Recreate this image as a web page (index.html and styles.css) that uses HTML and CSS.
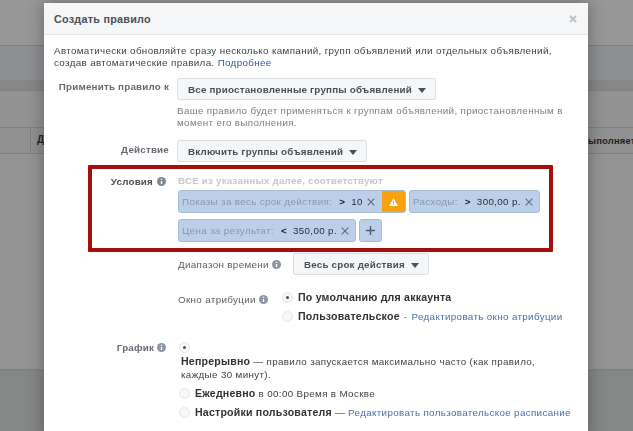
FILE: index.html
```html
<!DOCTYPE html>
<html lang="ru">
<head>
<meta charset="utf-8">
<title>Создать правило</title>
<link rel="stylesheet" href="styles.css">
</head>
<body>
<div class="backdrop">
  <div class="bg-row bg-a"></div>
  <div class="bg-row bg-b"></div>
  <div class="bg-row bg-c"></div>
  <div class="bg-row bg-d"><span class="bg-d-left">Д</span><span class="bg-d-right">ыполняет</span></div>
  <div class="bg-row bg-e"></div>
  <div class="bg-row bg-f"></div>
</div>
<section class="modal">
  <header class="modal-head">
    <h1>Создать правило</h1>
    <svg class="close" width="8" height="8" viewBox="0 0 8 8"><path d="M1 1l6 6M7 1l-6 6" stroke="#bcc0c6" stroke-width="1.8"/></svg>
  </header>
  <div class="modal-body">
    <p class="intro">Автоматически обновляйте сразу несколько кампаний, групп объявлений или отдельных объявлений, создав автоматические правила. <a>Подробнее</a></p>

    <div class="field apply">
      <div class="label">Применить правило к</div>
      <div class="content">
        <button class="select">Все приостановленные группы объявлений<i class="caret"></i></button>
        <p class="hint">Ваше правило будет применяться к группам объявлений, приостановленным в момент его выполнения.</p>
      </div>
    </div>

    <div class="field action">
      <div class="label">Действие</div>
      <div class="content">
        <button class="select">Включить группы объявлений<i class="caret"></i></button>
      </div>
    </div>

    <div class="conditions">
      <div class="label">Условия
        <svg class="info" viewBox="0 0 10 10"><circle cx="5" cy="5" r="5" fill="#7f8792"/><path d="M5 4.4v3.4M5 2v1.3" stroke="#fff" stroke-width="1.5"/></svg>
      </div>
      <div class="content">
        <div class="cond-title">ВСЕ из указанных далее, соответствуют</div>
        <div class="chips">
          <div class="chip warned">
            <span class="chip-name">Показы за весь срок действия:</span><b class="op">&gt;</b><span class="val">10</span>
            <svg class="x" viewBox="0 0 8 8"><path d="M.7.7l6.6 6.6M7.3.7L.7 7.3" stroke="#5d6c85" stroke-width="1.1"/></svg>
            <span class="warn"><svg width="9" height="8" viewBox="0 0 9 8"><path d="M4.5.2L9 8H0z" fill="#fff"/><path d="M4.5 2.8v2.6M4.5 6v1" stroke="#f7a30f" stroke-width=".9"/></svg></span>
          </div>
          <div class="chip">
            <span class="chip-name">Расходы:</span><b class="op">&gt;</b><span class="val">300,00 р.</span>
            <svg class="x" viewBox="0 0 8 8"><path d="M.7.7l6.6 6.6M7.3.7L.7 7.3" stroke="#5d6c85" stroke-width="1.1"/></svg>
          </div>
          <div class="chip">
            <span class="chip-name">Цена за результат:</span><b class="op">&lt;</b><span class="val">350,00 р.</span>
            <svg class="x" viewBox="0 0 8 8"><path d="M.7.7l6.6 6.6M7.3.7L.7 7.3" stroke="#5d6c85" stroke-width="1.1"/></svg>
          </div>
          <div class="chip plus"><svg width="9" height="9" viewBox="0 0 9 9"><path d="M4.5 0v9M0 4.5h9" stroke="#4f5d75" stroke-width="1.4"/></svg></div>
        </div>
      </div>
    </div>

    <div class="sub time">
      <span class="sub-label">Диапазон времени
        <svg class="info" viewBox="0 0 10 10"><circle cx="5" cy="5" r="5" fill="#8d95a0"/><path d="M5 4.4v3.4M5 2v1.3" stroke="#fff" stroke-width="1.5"/></svg>
      </span>
      <button class="select">Весь срок действия<i class="caret"></i></button>
    </div>

    <div class="sub attr">
      <span class="sub-label">Окно атрибуции
        <svg class="info" viewBox="0 0 10 10"><circle cx="5" cy="5" r="5" fill="#8d95a0"/><path d="M5 4.4v3.4M5 2v1.3" stroke="#fff" stroke-width="1.5"/></svg>
      </span>
      <div class="radios">
        <div class="radio-row"><i class="radio on"></i><b>По умолчанию для аккаунта</b></div>
        <div class="radio-row"><i class="radio"></i><b>Пользовательское</b><span class="dash"> - </span><a>Редактировать окно атрибуции</a></div>
      </div>
    </div>

    <div class="field schedule">
      <div class="label">График
        <svg class="info" viewBox="0 0 10 10"><circle cx="5" cy="5" r="5" fill="#8d95a0"/><path d="M5 4.4v3.4M5 2v1.3" stroke="#fff" stroke-width="1.5"/></svg>
      </div>
      <div class="content">
        <i class="radio on"></i>
        <p class="cont-text"><b>Непрерывно</b> — правило запускается максимально часто (как правило, каждые 30 минут).</p>
        <div class="radio-row daily"><i class="radio"></i><span><b>Ежедневно</b> в 00:00 Время в Москве</span></div>
        <div class="radio-row custom"><i class="radio"></i><span><b>Настройки пользователя</b> — <a>Редактировать пользовательское расписание</a></span></div>
      </div>
    </div>
  </div>
</section>
</body>
</html>
```
FILE: styles.css
```css
* { box-sizing: border-box; }
html, body { margin: 0; height: 100%; overflow: hidden; }
body {
  position: relative;
  background: #8a8a8a;
  font-family: "Liberation Sans", Arial, sans-serif;
  font-size: 9.8px;
  letter-spacing: 0.35px;
  color: #3f4349;
}
.backdrop { position: absolute; inset: 0; display: flex; flex-direction: column; }
.bg-row { border-bottom: 1px solid #7f7f7f; flex: none; position: relative; }
.bg-a { height: 46px; background: #979797; }
.bg-b { height: 45px; background: linear-gradient(#8d8f92 0 34px, #858687 34px); }
.bg-c { height: 37px; background: #929292; }
.bg-d { height: 26px; background: #909090; }
.bg-d::before { content: ""; position: absolute; left: 30px; top: 0; bottom: 0; width: 1px; background: #7f7f7f; }
.bg-e { height: 216px; background: #949494; }
.bg-f { flex: 1; background: #858686; border-bottom: 0; }
.bg-d-left { position: absolute; left: 37px; top: 6px; font-weight: 700; color: #222; font-size: 10px; }
.bg-d-right { position: absolute; left: 588px; top: 7px; font-weight: 700; color: #222; font-size: 9.4px; letter-spacing: .2px; white-space: nowrap; }

.modal {
  position: absolute;
  left: 44px;
  top: 3px;
  width: 544px;
  height: 440px;
  background: #fff;
  box-shadow: 0 0 16px rgba(0,0,0,.32);
  filter: blur(.35px);
}
.modal-head {
  height: 32px;
  background: #f5f6f7;
  border-bottom: 1px solid #e5e6e9;
  display: flex;
  align-items: center;
  justify-content: space-between;
  padding: 0 11px 0 10px;
}
.modal-head h1 { margin: 0; font-size: 10.8px; font-weight: 700; color: #4b4f56; letter-spacing: .25px; }
.modal-body { padding: 10px 10px 0; }
.intro { margin: 0; line-height: 12px; color: #3f4349; }
a { color: #4a6ea8; }
.intro a { color: #365899; }

.field { display: flex; }
.label { width: 115px; flex: none; text-align: right; font-weight: 700; color: #666a71; white-space: nowrap; letter-spacing: .2px; }
.content { margin-left: 8px; flex: 1; min-width: 0; }

.select {
  display: inline-flex;
  align-items: center;
  height: 22px;
  padding: 0 9px 0 10px;
  background: #f5f6f7;
  border: 1px solid #dddfe2;
  border-radius: 2px;
  font: inherit;
  font-weight: 700;
  letter-spacing: .2px;
  color: #4b4f56;
}
.caret {
  width: 0; height: 0; margin-left: 6px; margin-top: 2px;
  border-left: 4.5px solid transparent;
  border-right: 4.5px solid transparent;
  border-top: 5px solid #4b4f56;
}
.apply { margin-top: 9px; }
.apply .label { padding-top: 3px; }
.hint { margin: 5px 0 0; line-height: 12px; color: #7c8087; width: 390px; }
.action { margin-top: 11px; }
.action .label { padding-top: 4px; }

.conditions {
  display: flex;
  margin: 3px 0 0 34px;
  width: 465px;
  height: 87px;
  border: 4px solid #a30f0f;
  border-radius: 1px;
  padding-top: 5px;
}
.conditions .label { width: 74px; color: #4b4f56; display: flex; justify-content: flex-end; gap: 4px; align-items: center; height: 14px; }
.conditions .content { margin-left: 12px; }
.info { width: 9px; height: 9px; vertical-align: -1px; display: inline-block; flex: none; }
.cond-title { font-weight: 700; color: #c4c7cc; line-height: 14px; letter-spacing: .2px; }
.chips { display: flex; flex-wrap: wrap; gap: 6px 3px; margin-top: 2px; width: 370px; }
.chip {
  display: flex; align-items: center;
  height: 23px; padding: 0 3px 0 3px;
  background: #bccfe8;
  border: 1px solid #a9bcd6;
  border-radius: 3px;
  color: #2b2f36;
  overflow: hidden;
}
.chip-name { color: #8c98aa; }
.op { margin-left: 7px; color: #1a1d21; }
.val { margin-left: 6px; }
.x { width: 8px; height: 8px; margin: 0 3px 0 4px; }
.warned { padding-right: 0; }
.warn { align-self: stretch; width: 23px; margin-left: 4px; background: #f7a30f; display: flex; align-items: center; justify-content: center; }
.plus { width: 23px; justify-content: center; padding: 0; }

.sub { display: flex; margin-left: 124px; }
.sub-label { flex: none; color: #5a5e65; }
.time { margin-top: 1px; align-items: center; gap: 12px; }
.attr { margin-top: 16px; }
.attr .sub-label { width: 104px; padding-top: 3px; }
.radios { display: flex; flex-direction: column; gap: 7px; }
.radio-row { display: flex; align-items: center; white-space: nowrap; color: #3f4349; }
.radio-row b, .cont-text b { color: #2f3237; font-size: 10.6px; letter-spacing: .2px; }
.radio {
  display: inline-block; flex: none;
  width: 11px; height: 11px; border-radius: 50%;
  background: #f6f7f8;
  border: 1px solid #e4e6ea;
  position: relative;
  margin-right: 5px;
}
.radio.on::after {
  content: ""; position: absolute; left: 3px; top: 3px;
  width: 3px; height: 3px; border-radius: 50%; background: #4b4f56;
}
.dash { white-space: pre; color: #4a6ea8; margin: 0 1px; }
.schedule { margin-top: 20px; }
.schedule .label { width: 112px; }
.schedule .content { margin-left: 15px; }
.schedule .radio { display: block; margin-left: -2px; }
.cont-text { margin: 2px 0 0; line-height: 13px; width: 378px; }
.daily { margin-top: 6px; }
.custom { margin-top: 7px; }
```
